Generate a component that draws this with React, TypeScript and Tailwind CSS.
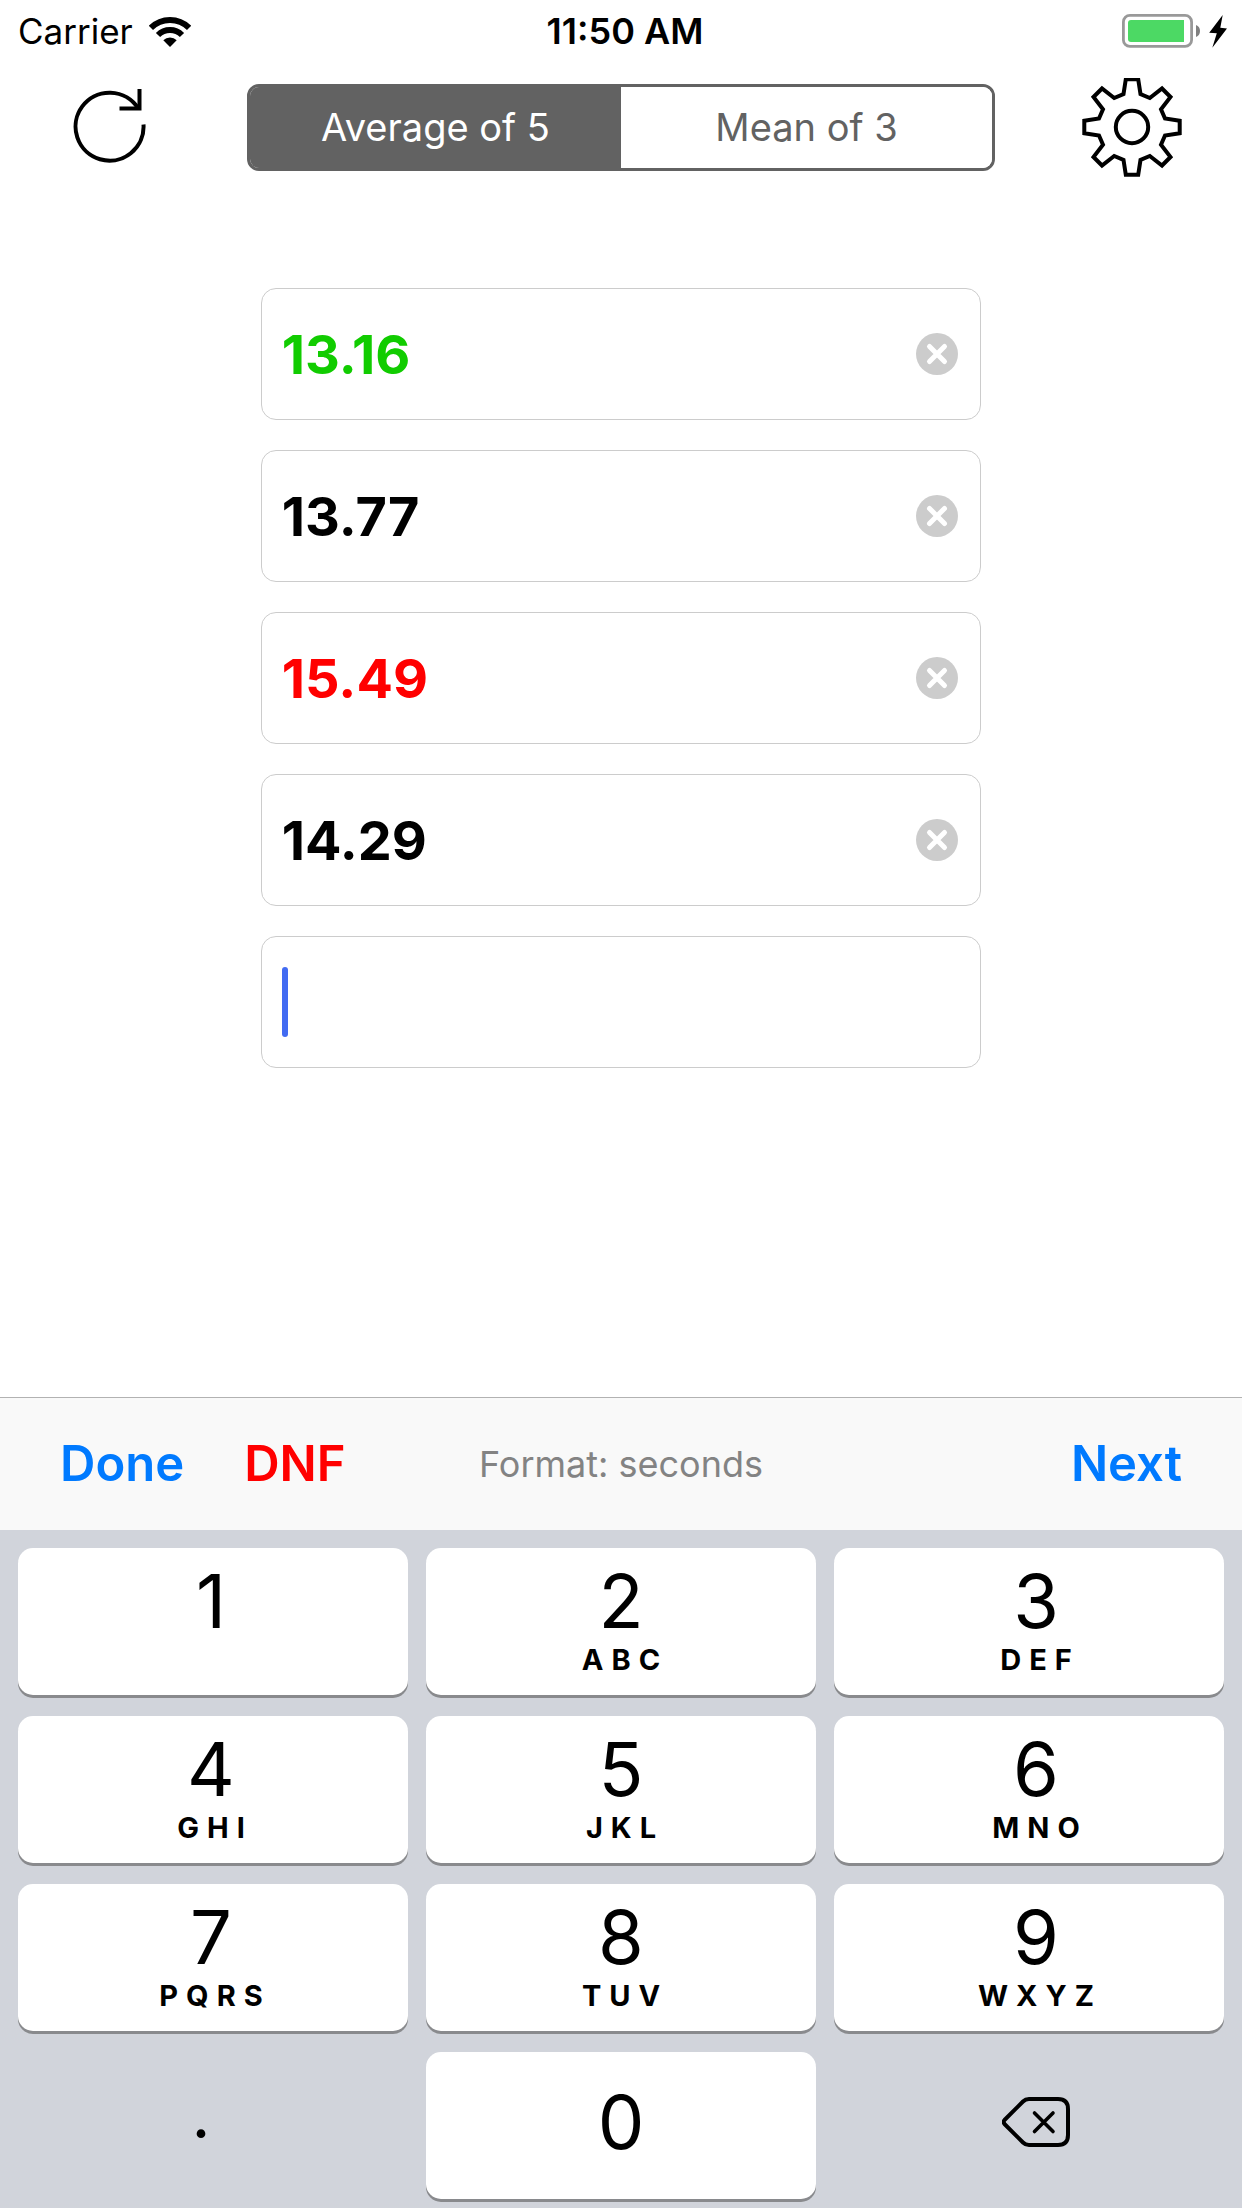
import { useState } from 'react';
import clsx from 'clsx';

type Mode = 'average' | 'mean';

interface KeyDef {
  digit: string;
  letters?: string;
}

const MODES: { id: Mode; label: string }[] = [
  { id: 'average', label: 'Average of 5' },
  { id: 'mean', label: 'Mean of 3' },
];

const KEYS: KeyDef[] = [
  { digit: '1' },
  { digit: '2', letters: 'ABC' },
  { digit: '3', letters: 'DEF' },
  { digit: '4', letters: 'GHI' },
  { digit: '5', letters: 'JKL' },
  { digit: '6', letters: 'MNO' },
  { digit: '7', letters: 'PQRS' },
  { digit: '8', letters: 'TUV' },
  { digit: '9', letters: 'WXYZ' },
];

/**
 * Gets the text color of a solve: green for the best, red for the worst
 */
function getTimeColor(time: string, times: string[]): string {
  const values = times.filter((t) => t !== '').map(Number);
  if (Number(time) === Math.min(...values)) return 'text-[#11cc00]';
  if (Number(time) === Math.max(...values)) return 'text-[#ff0000]';
  return 'text-black';
}

function WifiIcon() {
  return (
    <svg className="w-[42px] h-[31px]" viewBox="0 0 42 31" fill="none" stroke="black" strokeWidth={6}>
      <path d="M1.9 11.9A27 27 0 0 1 40.1 11.9" />
      <path d="M9 19A17 17 0 0 1 33 19" />
      <path d="M21 31L14.3 24.3A9.5 9.5 0 0 1 27.7 24.3Z" fill="black" stroke="none" />
    </svg>
  );
}

function BatteryIcon() {
  return (
    <svg className="w-[106px] h-[34px]" viewBox="0 0 106 34">
      <rect x="1.4" y="1.4" width="68.2" height="31" rx="6.5" fill="none" stroke="#999999" strokeWidth={2.8} />
      <path d="M9 6H62V28H9A3 3 0 0 1 6 25V9A3 3 0 0 1 9 6Z" fill="#4cd964" />
      <path d="M74 11A6.5 6.5 0 0 1 74 23Z" fill="#808080" />
      <path d="M100.7 1L87.2 18.8L94.8 19.3L90.3 33.7L105 14.4L98.3 13.8Z" fill="black" />
    </svg>
  );
}

function ResetIcon() {
  return (
    <svg className="w-[74px] h-[79px]" viewBox="0 0 74 79" fill="none" stroke="black" strokeWidth={4}>
      <path d="M70.5 36.5A34 34 0 1 1 65 20" />
      <path d="M66.5 1V20.5H46.5" />
    </svg>
  );
}

function GearIcon() {
  return (
    <svg className="w-[100px] h-[100px]" viewBox="-50 -49 100 100" fill="none" stroke="black" strokeWidth={4}>
      <path d="M6.2 -47.7L8.5 -33L17.8 -29L30 -38.5L38.5 -30L29 -17.8L33 -8.5L47.7 -6.2V6.2L33 8.5L29 17.8L38.5 30L30 38.5L17.8 29L8.5 33L6.2 47.7H-6.2L-8.5 33L-17.8 29L-30 38.5L-38.5 30L-29 17.8L-33 8.5L-47.7 6.2V-6.2L-33 -8.5L-29 -17.8L-38.5 -30L-30 -38.5L-17.8 -29L-8.5 -33L-6.2 -47.7Z" />
      <circle r="16.2" />
    </svg>
  );
}

function ClearIcon() {
  return (
    <svg className="w-[42px] h-[42px]" viewBox="0 0 42 42">
      <circle cx="21" cy="21" r="21" fill="#cccccc" />
      <path d="M13.5 13.5L28.5 28.5M28.5 13.5L13.5 28.5" stroke="white" strokeWidth={5} strokeLinecap="round" />
    </svg>
  );
}

function BackspaceIcon() {
  return (
    <svg className="w-[68px] h-[50px]" viewBox="0 0 68 50" fill="none" stroke="black" strokeWidth={4} strokeLinecap="round" strokeLinejoin="round">
      <path d="M27 2H56Q66 2 66 12V38Q66 48 56 48H27Q23.500 48 21 45.500L2.500 27Q0.800 25 2.500 23L21 4.500Q23.500 2 27 2Z" />
      <path d="M32.500 16L51 34.500M51 16L32.500 34.500" strokeWidth={3.6} />
    </svg>
  );
}

interface TimeFieldProps {
  index: number;
  time: string;
  times: string[];
  onChange: (value: string) => void;
}

function TimeField({ index, time, times, onChange }: TimeFieldProps) {
  return (
    <div className="flex h-[132px] items-center rounded-[15px] border border-[#cccccc] pl-5 pr-[22px]">
      {time === '' && <span className="h-[70px] w-[6px] shrink-0 rounded-full bg-[#426bf2]" />}
      <input
        type="text"
        inputMode="decimal"
        aria-label={`Solve ${index + 1}`}
        value={time}
        onChange={(e) => onChange(e.target.value)}
        className={clsx(
          'h-full min-w-0 flex-1 bg-transparent text-[54px] font-bold caret-transparent outline-none',
          getTimeColor(time, times),
        )}
      />
      {time !== '' && (
        <button type="button" aria-label={`Clear solve ${index + 1}`} onClick={() => onChange('')}>
          <ClearIcon />
        </button>
      )}
    </div>
  );
}

export default function App() {
  const [mode, setMode] = useState<Mode>('average');
  const [times, setTimes] = useState(['13.16', '13.77', '15.49', '14.29', '']);

  const updateTime = (index: number, value: string) => {
    setTimes(times.map((t, i) => (i === index ? value : t)));
  };

  return (
    <div className="flex min-h-screen flex-col bg-white font-['Inter',sans-serif] text-black">
      {/* Status bar */}
      <div className="grid h-[60px] grid-cols-[1fr_auto_1fr] items-center pl-[18px] pr-[14px] pt-[2px] text-[35px]">
        <div className="flex items-center gap-4">
          <span>Carrier</span>
          <WifiIcon />
        </div>
        <span className="pl-1 text-[36px] font-semibold">11:50 AM</span>
        <div className="flex justify-end">
          <BatteryIcon />
        </div>
      </div>

      {/* Header */}
      <header className="flex h-[135px] items-center justify-between px-[60px]">
        <button type="button" aria-label="Reset" className="flex w-[100px] justify-center">
          <ResetIcon />
        </button>
        <div className="grid h-[87px] w-2/3 grid-cols-2 overflow-hidden rounded-xl border-[3px] border-[#626262] text-[38px]">
          {MODES.map(({ id, label }) => (
            <button
              key={id}
              type="button"
              aria-pressed={mode === id}
              onClick={() => setMode(id)}
              className={mode === id ? 'bg-[#626262] text-white' : 'bg-white text-[#626262]'}
            >
              {label}
            </button>
          ))}
        </div>
        <button type="button" aria-label="Settings" className="flex w-[100px] justify-center">
          <GearIcon />
        </button>
      </header>

      {/* Solve times */}
      <main className="mx-auto flex w-[58%] flex-1 flex-col gap-[30px] pt-[93px]">
        {times.map((time, i) => (
          <TimeField key={i} index={i} time={time} times={times} onChange={(value) => updateTime(i, value)} />
        ))}
      </main>

      {/* Keyboard toolbar */}
      <div className="grid h-[133px] grid-cols-[1fr_auto_1fr] items-center border-t border-[#b2b2b2] bg-[#f9f9f9] px-[60px] text-[49px] font-semibold">
        <div className="flex gap-[60px]">
          <button type="button" className="text-[#007aff]">Done</button>
          <button type="button" className="text-[#ff0000]">DNF</button>
        </div>
        <span className="text-[36px] font-normal text-[#838383]">Format: seconds</span>
        <button type="button" className="justify-self-end text-[#007aff]">Next</button>
      </div>

      {/* Number pad */}
      <div className="grid grid-cols-3 gap-x-[18px] gap-y-[21px] bg-[#d1d4db] px-[18px] pb-[9px] pt-[18px]">
        {KEYS.map(({ digit, letters }, i) => (
          <button
            key={digit}
            type="button"
            className={clsx(
              'flex h-[147px] flex-col items-center rounded-[15px] bg-white pt-4 shadow-[0_3px_0_#898a8d]',
              i % 3 === 0 && 'pr-1',
              i % 3 === 2 && 'pl-[14px]',
            )}
          >
            <span className="text-[74px] leading-[74px]">{digit}</span>
            {letters && (
              <span className="pl-2 text-[29px] font-bold leading-[44px] tracking-[8px]">{letters}</span>
            )}
          </button>
        ))}
        <button type="button" className="h-[147px] pb-6 pr-6 text-[66px] leading-[74px]">.</button>
        <button
          type="button"
          className="h-[147px] rounded-[15px] bg-white pb-2 text-[74px] leading-[74px] shadow-[0_3px_0_#898a8d]"
        >
          0
        </button>
        <button type="button" aria-label="Delete" className="flex h-[147px] items-center justify-center pb-2 pl-[14px]">
          <BackspaceIcon />
        </button>
      </div>
    </div>
  );
}
